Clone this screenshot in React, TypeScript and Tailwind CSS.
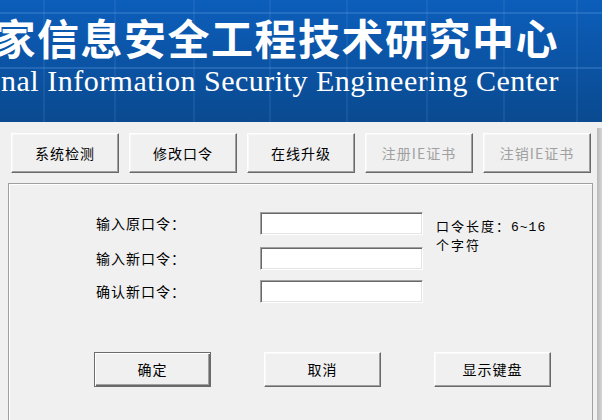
import React from 'react';

const raised =
  'border border-t-white border-l-white border-r-[#696969] border-b-[#696969] shadow-[inset_-1px_-1px_0_#a0a0a0,inset_1px_1px_0_#f8f8f8]';
const sunken =
  'border border-t-[#a0a0a0] border-l-[#a0a0a0] border-r-white border-b-white shadow-[inset_1px_1px_0_#696969,inset_-1px_-1px_0_#e3e3e3] bg-white';

function ToolButton({ label, disabled }: { label: string; disabled?: boolean }) {
  return (
    <button
      className={`w-[108px] h-[40px] bg-[#f0f0f0] text-[14px] tracking-[1px] ${raised} ${disabled ? 'text-[#a0a0a0]' : 'text-black'}`}
    >
      {label}
    </button>
  );
}

function Row({ label, className }: { label: string; className?: string }) {
  return (
    <div className={`flex items-center h-[23px] ${className ?? ''}`}>
      <span className="w-[164px] text-[14px] tracking-[1px] text-black">{label}</span>
      <input type="password" className={`w-[163px] h-[23px] outline-none ${sunken}`} />
    </div>
  );
}

function Banner() {
  const xs = [44, 115, 194, 270, 347, 427, 504, 577];
  return (
    <div className="relative h-[122px] w-[602px] overflow-hidden bg-gradient-to-b from-[#0c5ebb] to-[#0a4a90]">
      <svg className="absolute inset-0" width="602" height="122">
        {xs.map(x => (
          <line key={x} x1={x} y1="0" x2={x} y2="122" stroke="#5d9ae0" strokeOpacity="0.22" strokeWidth="1.5" />
        ))}
        <line x1="0" y1="13" x2="602" y2="13" stroke="#6aa6ea" strokeOpacity="0.35" strokeWidth="1.5" />
        <line x1="0" y1="68" x2="602" y2="68" stroke="#6aa6ea" strokeOpacity="0.35" strokeWidth="1.5" />
      </svg>
      <div className="relative flex flex-col items-end pr-[43px] pt-[14px]">
        <div className="whitespace-nowrap text-white text-[42px] leading-[46px] font-semibold tracking-[1.5px] font-['Noto_Sans_CJK_SC',sans-serif]">
          家信息安全工程技术研究中心
        </div>
        <div className="mt-[5px] whitespace-nowrap text-white text-[30px] leading-[32px] tracking-[0.5px] font-['Liberation_Serif',serif]">
          nal Information Security Engineering Center
        </div>
      </div>
    </div>
  );
}

export default function App() {
  return (
    <div className="w-[602px] h-[420px] overflow-hidden bg-[#f0f0f0] font-['Noto_Sans_CJK_SC',sans-serif]">
      <Banner />
      <div className="flex">
        <div className="w-[597px]">
          <div className="flex gap-[10px] pl-[11px] pt-[11px]">
            <ToolButton label="系统检测" />
            <ToolButton label="修改口令" />
            <ToolButton label="在线升级" />
            <ToolButton label="注册IE证书" disabled />
            <ToolButton label="注销IE证书" disabled />
          </div>
          <div className="ml-[8px] mt-[10px] w-[585px] h-[260px] border border-[#a0a0a0] shadow-[inset_1px_1px_0_#fff]">
            <div className="flex pt-[28px] pl-[87px]">
              <div className="flex flex-col">
                <Row label="输入原口令：" />
                <Row label="输入新口令：" className="mt-[12px]" />
                <Row label="确认新口令：" className="mt-[10px]" />
              </div>
              <div className="ml-[13px] pt-[5px] text-[13px] leading-[17px] tracking-[2px] text-black">
                <div>
                  口令长度：<span className="font-['Liberation_Mono',monospace] tracking-[1px]">6~16</span>
                </div>
                <div>个字符</div>
              </div>
            </div>
            <div className="flex gap-[53px] pl-[85px] mt-[49px]">
              <button className="w-[117px] h-[35px] bg-[#f0f0f0] text-[14px] tracking-[1px] text-black border border-[#6b6b6b] shadow-[inset_1px_1px_0_#fff,inset_-1px_-1px_0_#696969,inset_-2px_-2px_0_#a0a0a0]">
                确定
              </button>
              <button className={`w-[117px] h-[35px] bg-[#f0f0f0] text-[14px] tracking-[1px] text-black ${raised}`}>取消</button>
              <button className={`w-[117px] h-[35px] bg-[#f0f0f0] text-[14px] tracking-[1px] text-black ${raised}`}>显示键盘</button>
            </div>
          </div>
        </div>
        <div className="w-[5px] h-[298px] mt-[6px] bg-gradient-to-r from-[#b8b8b8] to-[#d6d6d6]" />
      </div>
    </div>
  );
}
